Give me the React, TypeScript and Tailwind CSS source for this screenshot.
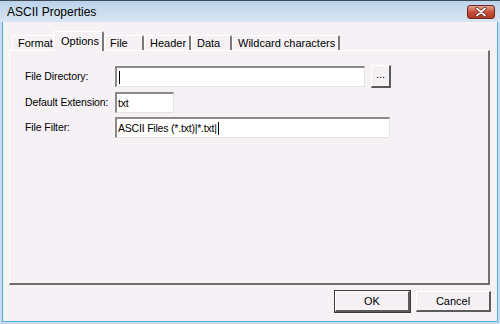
import React from 'react';

const tabs = [
    { label: 'Format', w: 'w-[43px]' },
    { label: 'Options', w: 'w-[51px]', active: true },
    { label: 'File', w: 'w-[40px]' },
    { label: 'Header', w: 'w-[47px]' },
    { label: 'Data', w: 'w-[41px]' },
    { label: 'Wildcard characters', w: 'w-[108px]' },
];

const Field = ({ w, value, cursor }: { w: string; value?: string; cursor?: boolean }) => (
    <div className={`${w} h-[21px] bg-white border-t-2 border-l-2 border-t-[#8a8a8a] border-l-[#8a8a8a] border-b border-r border-b-[#e4e4e4] border-r-[#e4e4e4] flex items-center pl-[1px] text-[10.5px] tracking-[-0.2px] leading-none`}>
        {value}
        {cursor && <span className="inline-block w-px h-[13px] bg-black ml-px" />}
    </div>
);

const Button = ({ label, isDefault }: { label: string; isDefault?: boolean }) => (
    <button
        className={`w-[75px] h-[21px] bg-[#f4f0f4] border-t border-l border-t-white border-l-white border-b-2 border-r-2 border-b-[#5a5a5a] border-r-[#5a5a5a] text-[11px] leading-none text-black ${isDefault ? 'outline outline-1 outline-[#3c3c3c]' : ''}`}
    >
        {label}
    </button>
);

export default function App() {
    return (
        <div
            className="w-[500px] h-[324px] flex flex-col bg-[#f5f1f5] border-l-2 border-r-2 border-b-2 border-[#c9dbee] text-black"
            style={{ fontFamily: '"Liberation Sans", Arial, sans-serif' }}
        >
            {/* Title bar */}
            <div className="h-[22px] shrink-0 -mx-[2px] flex items-center justify-between pl-[7px] pr-[5px] border-t border-[#3e4a56] bg-gradient-to-b from-[#bcd2ea] to-[#d9e6f3]">
                <span className="text-[12px] leading-none mt-[1px]">ASCII Properties</span>
                <div className="w-[28px] h-[14px] rounded-[3px] border border-[#6b2a22] bg-gradient-to-b from-[#e7a08f] via-[#c9503a] to-[#b13a25] flex items-center justify-center">
                    <svg width="12" height="10" viewBox="0 0 12 10">
                        <path d="M2 1.5 10 8.5M10 1.5 2 8.5" stroke="#5b1f17" strokeWidth="3.2" strokeLinecap="round" />
                        <path d="M2 1.5 10 8.5M10 1.5 2 8.5" stroke="#ffffff" strokeWidth="1.8" strokeLinecap="round" />
                    </svg>
                </div>
            </div>

            {/* Body */}
            <div className="flex-1 flex flex-col border-l border-r border-b border-[#4fb0e0] pl-[6px] pr-[5px]">
                {/* Tabs */}
                <div className="mt-[9px] h-[19px] flex items-end pl-[3px]">
                    {tabs.map((t) =>
                        t.active ? (
                            <div
                                key={t.label}
                                className={`${t.w} -ml-[2px] h-[20px] -mb-px relative z-10 bg-[#f5f1f5] border-t border-l border-white border-r-2 border-r-[#7a7a7a] rounded-t-[2px] pl-[7px] pt-[3px] text-[11px] leading-[13px]`}
                            >
                                {t.label}
                            </div>
                        ) : (
                            <div
                                key={t.label}
                                className={`${t.w} h-[15px] bg-[#f5f1f5] border-t border-l border-white border-r-2 border-r-[#7a7a7a] rounded-t-[2px] pl-[5px] pt-[1px] text-[11px] leading-[13px]`}
                            >
                                {t.label}
                            </div>
                        )
                    )}
                </div>

                {/* Panel */}
                <div className="h-[235px] mr-[2px] border-t border-l border-white border-b-2 border-r-2 border-b-[#6e6e6e] border-r-[#6e6e6e] pl-[15px] pt-[14px] flex flex-col gap-[4px] text-[10.5px] tracking-[-0.1px]">
                    <div className="flex items-center">
                        <span className="w-[90px]">File Directory:</span>
                        <Field w="w-[250px]" cursor />
                        <button className="ml-[6px] w-[20px] h-[23px] bg-[#f4f0f4] border-t border-l border-white border-b-2 border-r-2 border-b-[#5a5a5a] border-r-[#5a5a5a] text-[11px] leading-none pb-[3px]">
                            ...
                        </button>
                    </div>
                    <div className="flex items-center">
                        <span className="w-[90px]">Default Extension:</span>
                        <Field w="w-[59px]" value="txt" />
                    </div>
                    <div className="flex items-center">
                        <span className="w-[90px]">File Filter:</span>
                        <Field w="w-[275px]" value="ASCII Files (*.txt)|*.txt|" cursor />
                    </div>
                </div>

                {/* Buttons */}
                <div className="mt-[6px] flex justify-end gap-[6px] pr-[1px]">
                    <Button label="OK" isDefault />
                    <Button label="Cancel" />
                </div>
            </div>
        </div>
    );
}
